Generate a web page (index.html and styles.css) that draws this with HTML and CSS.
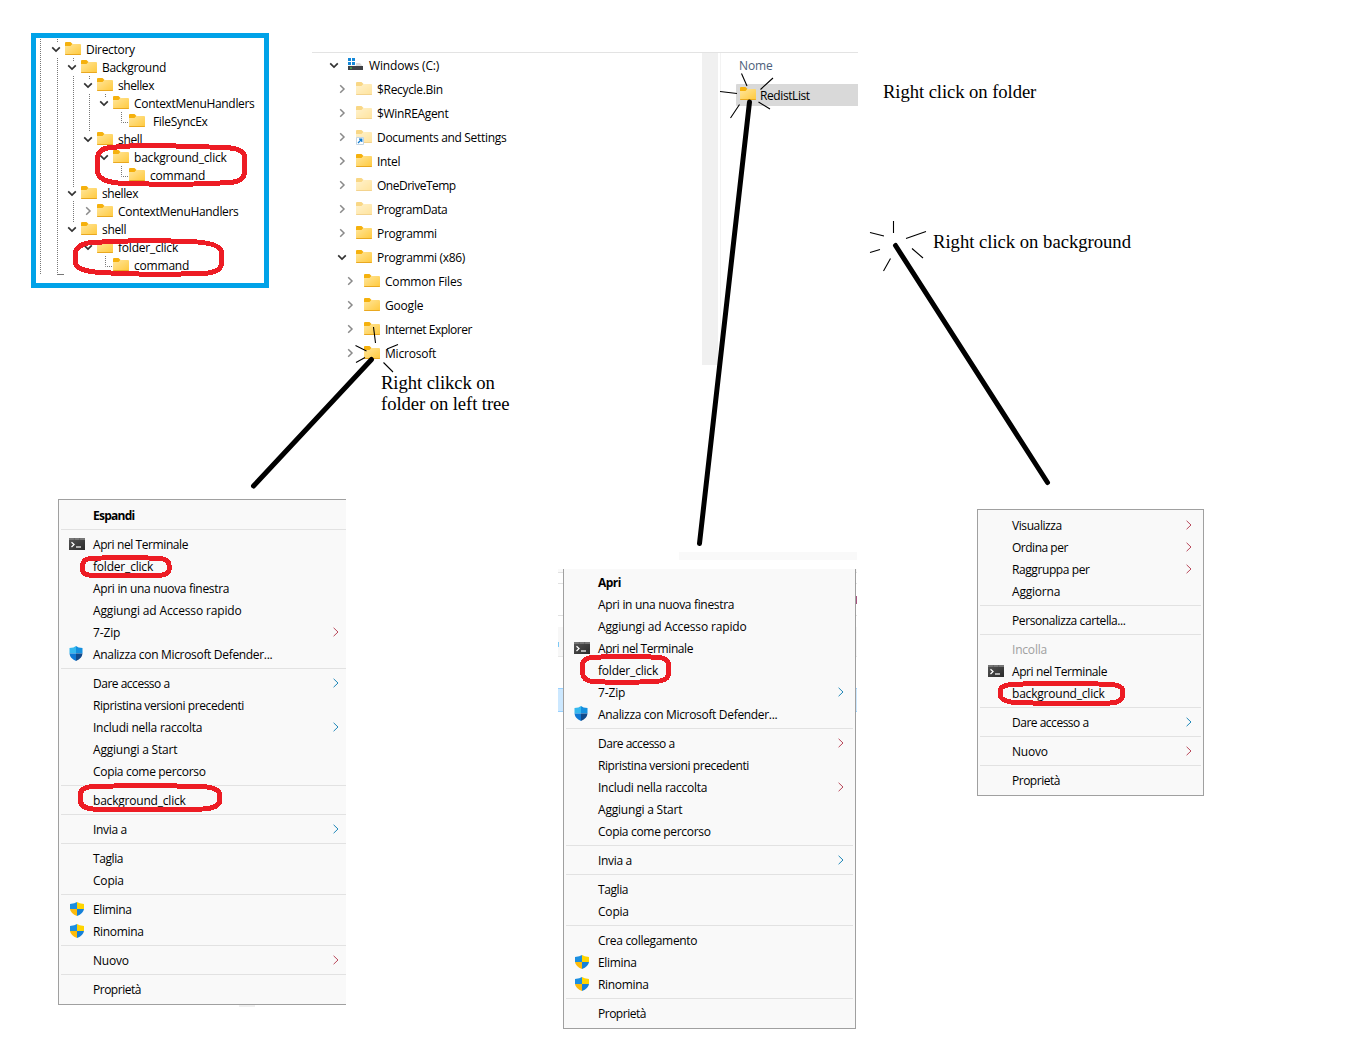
FILE: index.html
```html
<!DOCTYPE html>
<html lang="it">
<head>
<meta charset="utf-8">
<title>Context menu entries</title>
<link rel="stylesheet" href="styles.css">
</head>
<body>
<svg class="defs" width="0" height="0" aria-hidden="true">
  <defs>
    <linearGradient id="gf" x1="0" y1="0" x2="1" y2="1"><stop offset="0" stop-color="#ffe69c"/><stop offset="1" stop-color="#ffc93c"/></linearGradient>
    <linearGradient id="gt" x1="0" y1="0" x2="1" y2="1"><stop offset="0" stop-color="#555"/><stop offset="1" stop-color="#2b2b2b"/></linearGradient>
  </defs>
  <symbol id="folder" viewBox="0 0 16 14"><path d="M0 1Q0 0 1 0H5.500L7.500 2V5H0Z" fill="#f5b10d"/><path d="M0 4H5.500L7.300 2H15Q16 2 16 3V12Q16 13 15 13H1Q0 13 0 12Z" fill="url(#gf)"/><path d="M.2 12.500H15.800" stroke="#e9a820" stroke-width="1"/></symbol>
  <symbol id="down" viewBox="0 0 10 10"><path d="M1.200 3.300 5 7 8.800 3.300" fill="none" stroke="#333" stroke-width="1.700"/></symbol>
  <symbol id="right" viewBox="0 0 10 10"><path d="M3.200 1.200 7 5 3.200 8.800" fill="none" stroke="#8a8a8a" stroke-width="1.500"/></symbol>
  <symbol id="more" viewBox="0 0 6 10"><path d="M.6.8 5 5 .6 9.200" fill="none" stroke="currentColor" stroke-width="1"/></symbol>
  <symbol id="term" viewBox="0 0 16 12"><path d="M0 0H16V12H0Z" fill="url(#gt)"/><path d="M0 0H16V2H0Z" fill="#777"/><path d="M5.300 0V2M10.600 0V2" stroke="#555" stroke-width=".6"/><path d="M2.500 4.300 5 6.600 2.500 9" fill="none" stroke="#fff" stroke-width="1.300"/><path d="M7 9H12" stroke="#fff" stroke-width="1.200"/></symbol>
  <symbol id="defender" viewBox="0 0 14 15"><path d="M7 0Q5 1.800.5 2V7.500H7Z" fill="#35b8ee"/><path d="M7 0Q9 1.800 13.500 2V7.500H7Z" fill="#1590df"/><path d="M.5 7.500Q.8 12 7 15V7.500Z" fill="#0f78d4"/><path d="M13.500 7.500Q13.200 12 7 15V7.500Z" fill="#114a8b"/></symbol>
  <symbol id="uac" viewBox="0 0 14 14"><path d="M7 0Q5 1.700 0 2V7H7Z" fill="#1d8fe0"/><path d="M7 0Q9 1.700 14 2V7H7Z" fill="#ffd500"/><path d="M0 7Q.7 11.500 7 14V7Z" fill="#fdbb0c"/><path d="M14 7Q13.300 11.500 7 14V7Z" fill="#1681d8"/></symbol>
  <symbol id="drive" viewBox="0 0 16 14"><path d="M1 0H4V3H1ZM5 0H8V3H5ZM1 4H4V7H1ZM5 4H8V7H5Z" fill="#1488d8"/><path d="M9 5H13L15.500 8H1.500V7.700H9Z" fill="#dcdcdc"/><path d="M1 8H16V12H1Z" fill="#3f4246"/><path d="M3 10H5" stroke="#4be05a" stroke-width="1"/></symbol>
</svg>

<main class="canvas">
  <section class="registry">
    <svg class="guides" width="228" height="245" viewBox="36 38 228 245">
      <g fill="none" stroke="#777" stroke-width="1" stroke-dasharray="1 1">
        <path d="M40.500 39V274M57.500 39V42M57.500 58V273M73.500 58V62M73.500 76V187M73.500 201V223M89.500 76V80M89.500 94V132M105.500 94V98M121.500 112V122.500H129M105.500 148V152M121.500 166V176.500H129M105.500 256V266.500H113"/>
      </g>
      <path d="M57 274.500H64" stroke="#777"/>
    </svg>
    <div class="row l0"><svg class="car"><use href="#down"/></svg><svg class="fold"><use href="#folder"/></svg><span class="s3">Directory</span></div>
    <div class="row l1"><svg class="car"><use href="#down"/></svg><svg class="fold"><use href="#folder"/></svg><span class="s3">Background</span></div>
    <div class="row l2"><svg class="car"><use href="#down"/></svg><svg class="fold"><use href="#folder"/></svg><span class="s4">shellex</span></div>
    <div class="row l3"><svg class="car"><use href="#down"/></svg><svg class="fold"><use href="#folder"/></svg><span class="s3">ContextMenuHandlers</span></div>
    <div class="row l4"><i class="car"></i><svg class="fold"><use href="#folder"/></svg><span class="shift s3">FileSyncEx</span></div>
    <div class="row l2"><svg class="car"><use href="#down"/></svg><svg class="fold"><use href="#folder"/></svg><span class="s3">shell</span></div>
    <div class="row l3"><svg class="car"><use href="#down"/></svg><svg class="fold"><use href="#folder"/></svg><span>background_click</span></div>
    <div class="row l4"><i class="car"></i><svg class="fold"><use href="#folder"/></svg><span>command</span></div>
    <div class="row l1"><svg class="car"><use href="#down"/></svg><svg class="fold"><use href="#folder"/></svg><span class="s4">shellex</span></div>
    <div class="row l2"><svg class="car"><use href="#right"/></svg><svg class="fold"><use href="#folder"/></svg><span class="s3">ContextMenuHandlers</span></div>
    <div class="row l1"><svg class="car"><use href="#down"/></svg><svg class="fold"><use href="#folder"/></svg><span class="s3">shell</span></div>
    <div class="row l2"><svg class="car"><use href="#down"/></svg><svg class="fold"><use href="#folder"/></svg><span>folder_click</span></div>
    <div class="row l3"><i class="car"></i><svg class="fold"><use href="#folder"/></svg><span>command</span></div>
  </section>

  <section class="explorer">
    <div class="tree">
      <div class="row t0"><svg class="car"><use href="#down"/></svg><svg class="fold drive"><use href="#drive"/></svg><span class="s1">Windows (C:)</span></div>
      <div class="row t1 dim"><svg class="car"><use href="#right"/></svg><svg class="fold"><use href="#folder"/></svg><span class="s3">$Recycle.Bin</span></div>
      <div class="row t1 dim"><svg class="car"><use href="#right"/></svg><svg class="fold"><use href="#folder"/></svg><span class="s3">$WinREAgent</span></div>
      <div class="row t1 dim link"><svg class="car"><use href="#right"/></svg><svg class="fold"><use href="#folder"/></svg><svg class="arrow" viewBox="0 0 8 8"><path d="M.5.5H7.500V7.500H.5Z" fill="#fff" stroke="#c5d5e2"/><path d="M2 6 5.500 2.500M3 2.200H5.800V5" fill="none" stroke="#0a78d0" stroke-width="1.200"/></svg><span class="s3">Documents and Settings</span></div>
      <div class="row t1"><svg class="car"><use href="#right"/></svg><svg class="fold"><use href="#folder"/></svg><span class="s3">Intel</span></div>
      <div class="row t1 dim"><svg class="car"><use href="#right"/></svg><svg class="fold"><use href="#folder"/></svg><span class="s5">OneDriveTemp</span></div>
      <div class="row t1 dim"><svg class="car"><use href="#right"/></svg><svg class="fold"><use href="#folder"/></svg><span class="s4">ProgramData</span></div>
      <div class="row t1"><svg class="car"><use href="#right"/></svg><svg class="fold"><use href="#folder"/></svg><span class="s3">Programmi</span></div>
      <div class="row t1"><svg class="car"><use href="#down"/></svg><svg class="fold"><use href="#folder"/></svg><span class="s3">Programmi (x86)</span></div>
      <div class="row t2"><svg class="car"><use href="#right"/></svg><svg class="fold"><use href="#folder"/></svg><span>Common Files</span></div>
      <div class="row t2"><svg class="car"><use href="#right"/></svg><svg class="fold"><use href="#folder"/></svg><span>Google</span></div>
      <div class="row t2"><svg class="car"><use href="#right"/></svg><svg class="fold"><use href="#folder"/></svg><span class="s5">Internet Explorer</span></div>
      <div class="row t2"><svg class="car"><use href="#right"/></svg><svg class="fold"><use href="#folder"/></svg><span>Microsoft</span></div>
    </div>
    <div class="scroll"></div>
    <div class="files">
      <div class="head">Nome</div>
      <div class="file"><svg class="fold"><use href="#folder"/></svg><span class="s4">RedistList</span></div>
    </div>
  </section>

  <p class="note n1">Right clikck on<br>folder on left tree</p>
  <p class="note n2">Right click on folder</p>
  <p class="note n3">Right click on background</p>

  <div class="remnant"></div>
  <div class="stub"></div>
  <div class="behind"><i class="b1"></i><i class="b2"></i><i class="b3"></i><i class="b4"></i></div>
  <div class="edge"></div>
  <div class="tick"></div>

  <nav class="menu m1">
    <div class="item bold"><span class="s7">Espandi</span></div>
    <hr>
    <div class="item"><svg class="ic term"><use href="#term"/></svg><span class="s4">Apri nel Terminale</span></div>
    <div class="item"><span>folder_click</span></div>
    <div class="item"><span class="s3">Apri in una nuova finestra</span></div>
    <div class="item"><span class="s1">Aggiungi ad Accesso rapido</span></div>
    <div class="item"><span class="s1">7-Zip</span><svg class="more red"><use href="#more"/></svg></div>
    <div class="item"><svg class="ic def"><use href="#defender"/></svg><span class="s3">Analizza con Microsoft Defender...</span></div>
    <hr>
    <div class="item"><span class="s5">Dare accesso a</span><svg class="more"><use href="#more"/></svg></div>
    <div class="item"><span class="s4">Ripristina versioni precedenti</span></div>
    <div class="item"><span class="s2">Includi nella raccolta</span><svg class="more"><use href="#more"/></svg></div>
    <div class="item"><span>Aggiungi a Start</span></div>
    <div class="item"><span class="s3">Copia come percorso</span></div>
    <hr>
    <div class="item"><span>background_click</span></div>
    <hr>
    <div class="item"><span class="s3">Invia a</span><svg class="more"><use href="#more"/></svg></div>
    <hr>
    <div class="item"><span class="s4">Taglia</span></div>
    <div class="item"><span>Copia</span></div>
    <hr>
    <div class="item"><svg class="ic uac"><use href="#uac"/></svg><span class="s3">Elimina</span></div>
    <div class="item"><svg class="ic uac"><use href="#uac"/></svg><span class="s3">Rinomina</span></div>
    <hr>
    <div class="item"><span>Nuovo</span><svg class="more red"><use href="#more"/></svg></div>
    <hr>
    <div class="item"><span class="s5">Proprietà</span></div>
  </nav>

  <nav class="menu m2">
    <div class="item bold"><span>Apri</span></div>
    <div class="item"><span class="s3">Apri in una nuova finestra</span></div>
    <div class="item"><span class="s1">Aggiungi ad Accesso rapido</span></div>
    <div class="item"><svg class="ic term"><use href="#term"/></svg><span class="s4">Apri nel Terminale</span></div>
    <div class="item"><span>folder_click</span></div>
    <div class="item"><span class="s1">7-Zip</span><svg class="more"><use href="#more"/></svg></div>
    <div class="item"><svg class="ic def"><use href="#defender"/></svg><span class="s3">Analizza con Microsoft Defender...</span></div>
    <hr>
    <div class="item"><span class="s5">Dare accesso a</span><svg class="more red"><use href="#more"/></svg></div>
    <div class="item"><span class="s4">Ripristina versioni precedenti</span></div>
    <div class="item"><span class="s2">Includi nella raccolta</span><svg class="more red"><use href="#more"/></svg></div>
    <div class="item"><span>Aggiungi a Start</span></div>
    <div class="item"><span class="s3">Copia come percorso</span></div>
    <hr>
    <div class="item"><span class="s3">Invia a</span><svg class="more"><use href="#more"/></svg></div>
    <hr>
    <div class="item"><span class="s4">Taglia</span></div>
    <div class="item"><span>Copia</span></div>
    <hr>
    <div class="item"><span class="s3">Crea collegamento</span></div>
    <div class="item"><svg class="ic uac"><use href="#uac"/></svg><span class="s3">Elimina</span></div>
    <div class="item"><svg class="ic uac"><use href="#uac"/></svg><span class="s3">Rinomina</span></div>
    <hr>
    <div class="item"><span class="s5">Proprietà</span></div>
  </nav>

  <nav class="menu m3">
    <div class="item"><span class="s4">Visualizza</span><svg class="more red"><use href="#more"/></svg></div>
    <div class="item"><span class="s5">Ordina per</span><svg class="more red"><use href="#more"/></svg></div>
    <div class="item"><span class="s4">Raggruppa per</span><svg class="more red"><use href="#more"/></svg></div>
    <div class="item"><span>Aggiorna</span></div>
    <hr>
    <div class="item"><span class="s4">Personalizza cartella...</span></div>
    <hr>
    <div class="item off"><span>Incolla</span></div>
    <div class="item"><svg class="ic term"><use href="#term"/></svg><span class="s4">Apri nel Terminale</span></div>
    <div class="item"><span>background_click</span></div>
    <hr>
    <div class="item"><span class="s5">Dare accesso a</span><svg class="more"><use href="#more"/></svg></div>
    <hr>
    <div class="item"><span>Nuovo</span><svg class="more red"><use href="#more"/></svg></div>
    <hr>
    <div class="item"><span class="s5">Proprietà</span></div>
  </nav>

  <svg class="ink" width="1366" height="1044" viewBox="0 0 1366 1044">
    <g fill="none" stroke="#000" stroke-width="5" stroke-linecap="round">
      <path d="M371.500 359.500 253.500 486"/><path d="M749.500 102 699.500 543.500"/><path d="M895.500 245.500 1047.500 482.500"/>
    </g>
    <g fill="none" stroke="#000" stroke-width="1.100">
      <path d="M373.500 327 375.500 343M355.500 345.500 366.500 351M356 362.500 365 357.500M387 349 398 344.500M383.500 362.500 393 372"/>
      <path d="M741.500 73.500 747 86M760.500 89.500 773 78M720 91.500 737 93.500M739.500 104.500 730.500 118M758.500 102 770 109"/>
      <path d="M893.500 221V233M870 232.500 884 236M906 238.500 926 231.500M870 252.500 880 249.500M890.500 258.500 883.500 271M912 248.500 923 258"/>
    </g>
    <g fill="none" stroke="#ed1c24" stroke-width="5" shape-rendering="crispEdges">
      <path d="M110 147.500Q145 144 176 146L226 147.500Q244 149 244.500 156V172Q244 181 231 182.500Q190 184.500 165 184.500L118 183Q98 181 97.500 171V158Q98 149 110 147.500Z"/>
      <path d="M88 243Q130 239.500 190 241.500Q221 243 221.500 252V264Q220 273 202 273.500Q140 275.500 95 272Q76 270 75 262V253Q77 245 88 243Z"/>
      <path d="M90 558.500Q125 556.500 160 558.500Q169 559.500 169 565V570Q168 575 158 575.500H92Q83 575 82.500 570V565Q83 559.500 90 558.500Z"/>
      <path d="M93 786.500Q140 785 203 786.500Q219 788 219.500 794V802Q217 808.500 203 809Q145 811 93 809Q81 808 80.500 801V793Q82 787 93 786.500Z"/>
      <path d="M592 657.500Q625 655 660 657.500Q668 659 668.500 664V675Q667 681 655 681.500Q620 683 592 681.500Q583 680 582.500 673V664Q583 658.500 592 657.500Z"/>
      <path d="M1011 684.500Q1060 682 1112 684.500Q1122 685.500 1122.500 690V697Q1121 702.500 1110 703Q1060 705 1011 702Q1001 700 1000.500 696V690Q1001 685.500 1011 684.500Z"/>
    </g>
  </svg>
</main>
</body>
</html>
```

FILE: styles.css
```css
* { box-sizing: border-box; }
body { margin: 0; background: #fff; color: #000; font: 12px/18px "Open Sans", "Noto Sans", sans-serif; letter-spacing: -0.2px; }
.defs { position: absolute; }
.canvas { position: relative; width: 1366px; height: 1044px; overflow: hidden; }
svg { display: block; flex: none; }

/* Tracking steps for labels */
.s1 { letter-spacing: -0.140px; }
.s2 { letter-spacing: -0.240px; }
.s3 { letter-spacing: -0.320px; }
.s4 { letter-spacing: -0.410px; }
.s5 { letter-spacing: -0.490px; }
.s7 { letter-spacing: -0.750px; }

/* Tree rows */
.row { display: flex; align-items: center; position: relative; white-space: nowrap; }
.row span, .file span { padding-top: 1px; }
.car { width: 10px; height: 10px; flex: none; }
.fold { width: 16px; height: 14px; }
.dim .fold { opacity: .5; }

.registry { position: absolute; left: 31px; top: 33px; width: 238px; height: 255px; border: 5px solid #00a2e8; padding-top: 2px; }
.guides { position: absolute; left: 0; top: 0; }
.registry .row { height: 18px; gap: 4px; }
.registry .row span { margin-left: 1px; }
.registry .row .shift { margin-left: 4px; }
.l0 { padding-left: 15px; }
.l1 { padding-left: 31px; }
.l2 { padding-left: 47px; }
.l3 { padding-left: 63px; }
.l4 { padding-left: 79px; }

.explorer { position: absolute; left: 312px; top: 52px; width: 546px; height: 313px; border-top: 1px solid #e3e3e3; display: flex; }
.tree { width: 390px; }
.tree .row { height: 24px; }
.tree .fold { margin: 0 5px 0 9px; }
.tree .drive { margin: 0 6px 0 8px; }
.t0 { padding-left: 17px; }
.t1 { padding-left: 25px; }
.t2 { padding-left: 33px; }
.arrow { position: absolute; left: 44px; top: 12px; width: 8px; height: 8px; }
.scroll { width: 16px; background: #f0f0f0; }
.files { flex: 1; margin-left: 2px; border-left: 1px solid #f3f3f3; padding: 3px 0 0 15px; }
.head { height: 20px; line-height: 20px; padding-left: 3px; color: #4c607a; letter-spacing: -0.1px; }
.file { margin-top: 8px; height: 22px; background: #d9d9d9; display: flex; align-items: center; gap: 4px; padding-left: 4px; border-radius: 1px 0 0 1px; }
.file .fold { margin-bottom: 2px; }

.note { position: absolute; margin: 0; font: 18.670px/21px "Liberation Serif", serif; letter-spacing: -0.08px; white-space: nowrap; }
.n1 { left: 381px; top: 372px; }
.n2 { left: 883px; top: 81px; }
.n3 { left: 933px; top: 231px; letter-spacing: -0.02px; }

/* Context menus */
.menu { position: absolute; background: #f9f9f9; border: 1px solid #a0a0a0; padding: 4px 2px; }
.m1 { left: 58px; top: 499px; width: 288px; height: 506px; border-right: 0; padding-right: 0; }
.m2 { left: 563px; top: 569px; width: 293px; height: 460px; border-top: 0; padding-top: 2px; }
.m3 { left: 977px; top: 509px; width: 227px; height: 287px; }
.item { position: relative; height: 22px; line-height: 22px; padding: 0 9px 0 32px; display: flex; align-items: center; justify-content: space-between; white-space: nowrap; }
.item span { line-height: 20px; padding-top: 1px; }
.m1 .item { padding-right: 7px; }
.menu hr { height: 1px; margin: 3px 0; border: 0; background: #e2e2e2; }
.bold { font-weight: 700; letter-spacing: -0.500px; }
.off { color: #a0a0a0; }
.ic { position: absolute; left: 8px; top: 5px; }
.term { width: 16px; height: 12px; }
.def { width: 14px; height: 15px; top: 3px; }
.uac { width: 14px; height: 14px; left: 9px; top: 4px; }
.more { width: 6px; height: 10px; color: #1f87b8; }
.more.red { color: #b8485a; }

/* Scraps of the windows behind the menus */
.remnant { position: absolute; left: 679px; top: 552px; width: 178px; height: 8px; background: #f9f9f9; }
.stub { position: absolute; left: 239px; top: 1005px; width: 16px; height: 2px; background: #f0f0f0; }
.behind { position: absolute; left: 558px; top: 569px; width: 299px; height: 143px; display: flex; flex-direction: column; }
.b1 { height: 4px; border-bottom: 1px solid #e1e1e1; background: #f9f9f9; }
.b2 { height: 11px; border-bottom: 1px solid #e1e1e1; }
.b3 { height: 33px; border-bottom: 1px solid #e1e1e1; }
.b4 { height: 31px; margin-top: 11px; background: #f7f7f7; border-bottom: 1px solid #e8e8e8; }
.behind::after { content: ""; height: 22px; margin-top: 31px; background: #cce8ff; border: solid #99d1ff; border-width: 1px 0; }
.edge { position: absolute; left: 856px; top: 596px; width: 1px; height: 8px; background: #a5537f; }
.tick { position: absolute; left: 558px; top: 642px; width: 1px; height: 5px; background: #7cc8f5; }

.ink { position: absolute; left: 0; top: 0; }
```
